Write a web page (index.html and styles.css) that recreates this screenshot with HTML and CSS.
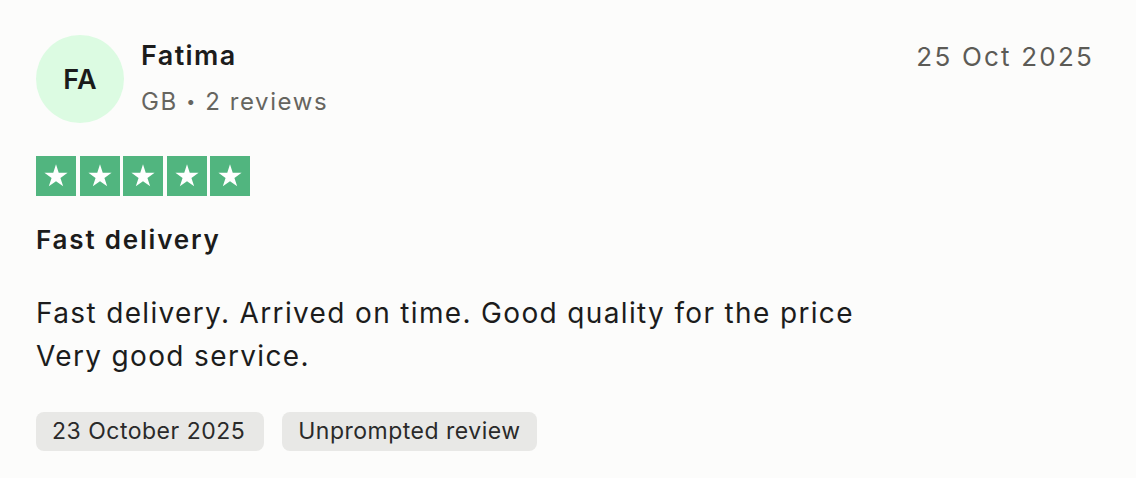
FILE: index.html
```html
<!DOCTYPE html>
<html lang="en">
<head>
<meta charset="utf-8">
<title>Review</title>
<link rel="stylesheet" href="styles.css">
</head>
<body>
<article class="review">
  <header class="review-header">
    <div class="consumer">
      <div class="avatar">FA</div>
      <div class="consumer-info">
        <div class="name">Fatima</div>
        <div class="meta">GB <span class="dot">•</span> 2 reviews</div>
      </div>
    </div>
    <time class="published">25 Oct 2025</time>
  </header>
  <div class="stars" aria-label="Rated 5 out of 5">
    <span class="star"><svg viewBox="0 0 24 24"><path d="M12 3.2l2.05 6.32h6.65l-5.38 3.9 2.06 6.33L12 15.85l-5.38 3.9 2.06-6.33-5.38-3.9h6.65z" fill="#fff"/></svg></span>
    <span class="star"><svg viewBox="0 0 24 24"><path d="M12 3.2l2.05 6.32h6.65l-5.38 3.9 2.06 6.33L12 15.85l-5.38 3.9 2.06-6.33-5.38-3.9h6.65z" fill="#fff"/></svg></span>
    <span class="star"><svg viewBox="0 0 24 24"><path d="M12 3.2l2.05 6.32h6.65l-5.38 3.9 2.06 6.33L12 15.85l-5.38 3.9 2.06-6.33-5.38-3.9h6.65z" fill="#fff"/></svg></span>
    <span class="star"><svg viewBox="0 0 24 24"><path d="M12 3.2l2.05 6.32h6.65l-5.38 3.9 2.06 6.33L12 15.85l-5.38 3.9 2.06-6.33-5.38-3.9h6.65z" fill="#fff"/></svg></span>
    <span class="star"><svg viewBox="0 0 24 24"><path d="M12 3.2l2.05 6.32h6.65l-5.38 3.9 2.06 6.33L12 15.85l-5.38 3.9 2.06-6.33-5.38-3.9h6.65z" fill="#fff"/></svg></span>
  </div>
  <h2 class="title">Fast delivery</h2>
  <p class="body">Fast delivery. Arrived on time. Good quality for the price<br>Very good service.</p>
  <div class="tags">
    <span class="tag">23 October 2025</span>
    <span class="tag">Unprompted review</span>
  </div>
</article>
</body>
</html>
```

FILE: styles.css
```css
html, body {
  margin: 0;
  padding: 0;
  background: #fcfcfb;
}
body {
  font-family: Inter, "Liberation Sans", Arial, sans-serif;
  color: #1c1c1c;
}
.review {
  padding: 35px 42px 0 36px;
}
.review-header {
  display: flex;
  justify-content: space-between;
  align-items: flex-start;
}
.consumer {
  display: flex;
  align-items: flex-start;
  gap: 17px;
}
.avatar {
  width: 88px;
  height: 88px;
  border-radius: 50%;
  background: #dcfbe2;
  display: flex;
  align-items: center;
  justify-content: center;
  font-size: 27px;
  font-weight: 600;
  color: #1a1a1a;
  letter-spacing: 0.3px;
}
.consumer-info {
  padding-top: 5px;
}
.name {
  font-size: 27px;
  line-height: 32px;
  font-weight: 600;
  color: #1c1c1c;
  letter-spacing: 1.4px;
}
.meta {
  margin-top: 14px;
  font-size: 24px;
  line-height: 30px;
  color: #66655f;
  letter-spacing: 1.6px;
}
.dot {
  font-size: 16px;
  vertical-align: 3px;
}
.published {
  margin-top: 6px;
  font-size: 26px;
  line-height: 32px;
  color: #5c5b56;
  letter-spacing: 2.2px;
}
.stars {
  display: flex;
  gap: 3.5px;
  margin-top: 33px;
}
.star {
  width: 40px;
  height: 40px;
  background: #51b57f;
  display: flex;
  align-items: center;
  justify-content: center;
}
.star svg {
  width: 32px;
  height: 32px;
}
.title {
  margin: 28px 0 0;
  font-size: 26px;
  line-height: 32px;
  font-weight: 600;
  color: #1c1c1c;
  letter-spacing: 1.8px;
}
.body {
  margin: 36px 0 0;
  font-size: 28px;
  line-height: 43px;
  color: #1c1c1c;
  letter-spacing: 1.35px;
}
.tags {
  display: flex;
  gap: 18px;
  margin-top: 34px;
}
.tag {
  background: #e8e8e6;
  border-radius: 8px;
  height: 39px;
  line-height: 39px;
  padding: 0 16px;
  font-size: 23px;
  color: #2a2a2a;
  letter-spacing: 0.5px;
}
.tag:first-child {
  padding-right: 19px;
}
```
